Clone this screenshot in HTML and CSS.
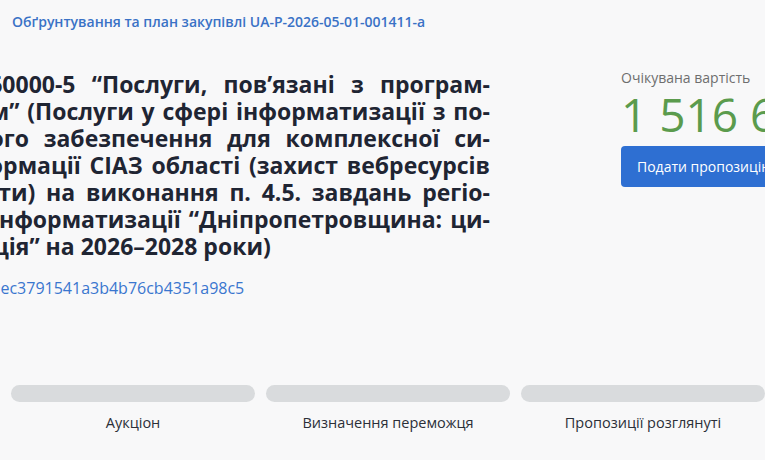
FILE: index.html
```html
<!DOCTYPE html>
<html lang="uk">
<head>
  <meta charset="utf-8">
  <title>Закупівля</title>
  <link rel="stylesheet" href="styles.css">
</head>
<body>
  <div class="top">
    <a class="plan-link" href="#">Обґрунтування та план закупівлі UA-P-2026-05-01-001411-a</a>
  </div>

  <div class="tender">
    <div class="tender-main">
      <!-- заголовок: рядки задані вручну, як їх розбиває сторінка -->
      <h1 class="tender-title">
        <span class="ln">ДК 021:2015 - 72260000-5 “Послуги, пов’язані з програм-</span>
        <span class="ln">ним забезпеченням” (Послуги у сфері інформатизації з по-</span>
        <span class="ln">стачання системного забезпечення для комплексної си-</span>
        <span class="ln">стеми захисту інформації СІАЗ області (захист вебресурсів</span>
        <span class="ln">і відтворення роботи) на виконання п. 4.5. завдань регіо-</span>
        <span class="ln">нальної програми інформатизації “Дніпропетровщина: ци-</span>
        <span class="ln last">фрова трансформація” на 2026–2028 роки)</span>
      </h1>
      <a class="tender-id" href="#">Ідентифікатор закупівлі: 4f0d9ec3791541a3b4b76cb4351a98c5</a>
    </div>

    <div class="tender-side">
      <div class="price-label">Очікувана вартість</div>
      <div class="price">1 516 600,00 ₴</div>
      <button class="btn-bid" type="button">Подати пропозицію</button>
    </div>
  </div>

  <div class="stages">
    <div class="stage"><div class="bar"></div><div class="stage-name">Подання пропозицій</div></div>
    <div class="stage"><div class="bar"></div><div class="stage-name">Аукціон</div></div>
    <div class="stage"><div class="bar"></div><div class="stage-name">Визначення переможця</div></div>
    <div class="stage"><div class="bar"></div><div class="stage-name">Пропозиції розглянуті</div></div>
  </div>
</body>
</html>
```

FILE: styles.css
```css
html, body {
  margin: 0;
  padding: 0;
}
body {
  background: #f8f8f9;
  font-family: "Open Sans", "Noto Sans", sans-serif;
  color: #1f2533;
  overflow: hidden;
  width: 765px;
  height: 460px;
}

.top {
  padding: 11px 12px 0;
  line-height: 20px;
}
.plan-link {
  font-size: 14px;
  font-weight: 600;
  color: #3a72c6;
  text-decoration: none;
}

/* блок закупівлі зсунутий лівіше вікна */
.tender {
  display: flex;
  align-items: flex-start;
  margin: 36px 0 0 -238px;
}
.tender-main {
  flex: 0 0 728px;
  min-width: 0;
  padding-top: 3px;
}
.tender-title {
  margin: 0;
  font-size: 23px;
  font-weight: 700;
  line-height: 27px;
  color: #1f2533;
  text-align: justify;
}
.ln {
  display: block;
  white-space: nowrap;
  text-align-last: justify;
}
.ln.last {
  text-align-last: left;
}
.tender-id {
  display: block;
  margin-top: 17px;
  padding-left: 4px;
  font-size: 16px;
  line-height: 22px;
  color: #3a76cf;
  text-decoration: none;
  white-space: nowrap;
}

.tender-side {
  margin-left: 131px;
  flex: 0 0 260px;
}
.price-label {
  font-size: 14px;
  line-height: 20px;
  color: #6e6e6e;
}
.price {
  font-size: 46px;
  line-height: 52px;
  color: #5b9b4d;
  white-space: nowrap;
}
.btn-bid {
  margin-top: 6px;
  width: 230px;
  height: 41px;
  border: 0;
  border-radius: 4px;
  background: #2e6fd2;
  color: #fff;
  font-family: inherit;
  font-size: 14px;
  text-align: left;
  padding: 0 16px;
}

/* етапи закупівлі */
.stages {
  display: flex;
  gap: 11px;
  margin-left: -244px;
  margin-top: 86px;
}
.stage {
  flex: 0 0 244px;
}
.bar {
  height: 17px;
  border-radius: 9px;
  background: #d9dbdd;
}
.stage-name {
  margin-top: 11px;
  font-size: 14.5px;
  line-height: 20px;
  text-align: center;
  color: #2b2f38;
}
```
